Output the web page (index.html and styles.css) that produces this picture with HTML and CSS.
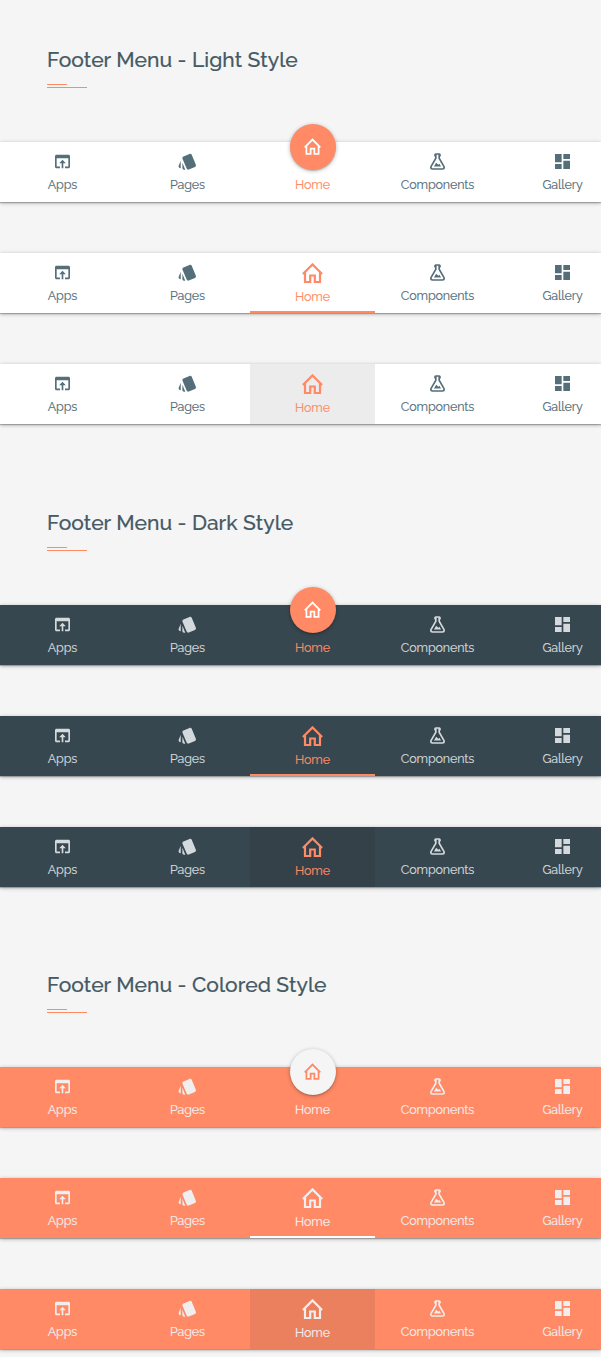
FILE: index.html
```html
<!DOCTYPE html>
<html lang="en">
<head>
<meta charset="utf-8">
<title>Footer Menu</title>
<link rel="stylesheet" href="styles.css">
</head>
<body>
<svg class="sprite" aria-hidden="true">
  <symbol id="apps" viewBox="0 0 24 24"><path d="M12 10l-4 4h3v6h2v-6h3m3.2-10H4.8C3.8 4 3 4.8 3 5.8v12.4c0 1 .8 1.8 1.8 1.8H9v-2H5V8h14v10h-4v2h4.2c1 0 1.8-.8 1.8-1.8V5.8c0-1-.8-1.8-1.8-1.8z"/></symbol>
  <symbol id="pages" viewBox="0 0 24 24"><path d="M2.53 19.65l1.34.56v-9.03l-2.43 5.86c-.41 1.02.08 2.19 1.09 2.61zm19.5-3.7L17.07 3.98c-.31-.75-1.04-1.21-1.81-1.23-.26 0-.53.04-.79.15L7.1 5.95c-.75.31-1.21 1.03-1.23 1.8-.01.27.04.54.15.8l4.96 11.97c.31.76 1.05 1.22 1.83 1.23.26 0 .52-.05.77-.15l7.36-3.05c1.02-.42 1.51-1.59 1.09-2.6zM5.88 19.75c0 1.1.9 2 2 2h1.45l-3.45-8.34v6.34z"/></symbol>
  <symbol id="flask" viewBox="0 0 24 24"><path d="M5,19A1,1 0 0,0 6,20H18A1,1 0 0,0 19,19C19,18.79 18.93,18.59 18.82,18.43L13,8.35V4H11V8.35L5.18,18.43C5.07,18.59 5,18.79 5,19M6,22A3,3 0 0,1 3,19C3,18.4 3.18,17.84 3.5,17.37L9,7.81V6A1,1 0 0,1 8,5V4A2,2 0 0,1 10,2H14A2,2 0 0,1 16,4V5A1,1 0 0,1 15,6V7.81L20.5,17.37C20.82,17.84 21,18.4 21,19A3,3 0 0,1 18,22H6M13,16L14.34,14.66L16.27,18H7.73L10.39,13.39L13,16Z"/></symbol>
  <symbol id="gallery" viewBox="0 0 24 24"><path d="M13,3V9H21V3M13,21H21V11H13M3,21H11V15H3M3,13H11V3H3V13Z"/></symbol>
  <symbol id="home" viewBox="0 0 21 20"><path fill="none" stroke="currentColor" stroke-width="2.2" d="M.9 11L10.5 1.4 20.1 11M3 9.5V19H8.2V12.5H12.8V19H18V9.5"/></symbol>
</svg>

<section class="group light">
  <h2 class="title">Footer Menu - Light Style</h2>
  <div class="rule"></div>
  <nav class="bar raised">
    <a class="item"><svg class="icon"><use href="#apps"/></svg><span class="label">Apps</span></a>
    <a class="item"><svg class="icon"><use href="#pages"/></svg><span class="label">Pages</span></a>
    <a class="item active"><span class="disc"><svg class="home"><use href="#home"/></svg></span><span class="label">Home</span></a>
    <a class="item"><svg class="icon"><use href="#flask"/></svg><span class="label">Components</span></a>
    <a class="item"><svg class="icon"><use href="#gallery"/></svg><span class="label">Gallery</span></a>
  </nav>
  <nav class="bar lined">
    <a class="item"><svg class="icon"><use href="#apps"/></svg><span class="label">Apps</span></a>
    <a class="item"><svg class="icon"><use href="#pages"/></svg><span class="label">Pages</span></a>
    <a class="item active"><svg class="home"><use href="#home"/></svg><span class="label">Home</span></a>
    <a class="item"><svg class="icon"><use href="#flask"/></svg><span class="label">Components</span></a>
    <a class="item"><svg class="icon"><use href="#gallery"/></svg><span class="label">Gallery</span></a>
  </nav>
  <nav class="bar filled">
    <a class="item"><svg class="icon"><use href="#apps"/></svg><span class="label">Apps</span></a>
    <a class="item"><svg class="icon"><use href="#pages"/></svg><span class="label">Pages</span></a>
    <a class="item active"><svg class="home"><use href="#home"/></svg><span class="label">Home</span></a>
    <a class="item"><svg class="icon"><use href="#flask"/></svg><span class="label">Components</span></a>
    <a class="item"><svg class="icon"><use href="#gallery"/></svg><span class="label">Gallery</span></a>
  </nav>
</section>

<section class="group dark">
  <h2 class="title">Footer Menu - Dark Style</h2>
  <div class="rule"></div>
  <nav class="bar raised">
    <a class="item"><svg class="icon"><use href="#apps"/></svg><span class="label">Apps</span></a>
    <a class="item"><svg class="icon"><use href="#pages"/></svg><span class="label">Pages</span></a>
    <a class="item active"><span class="disc"><svg class="home"><use href="#home"/></svg></span><span class="label">Home</span></a>
    <a class="item"><svg class="icon"><use href="#flask"/></svg><span class="label">Components</span></a>
    <a class="item"><svg class="icon"><use href="#gallery"/></svg><span class="label">Gallery</span></a>
  </nav>
  <nav class="bar lined">
    <a class="item"><svg class="icon"><use href="#apps"/></svg><span class="label">Apps</span></a>
    <a class="item"><svg class="icon"><use href="#pages"/></svg><span class="label">Pages</span></a>
    <a class="item active"><svg class="home"><use href="#home"/></svg><span class="label">Home</span></a>
    <a class="item"><svg class="icon"><use href="#flask"/></svg><span class="label">Components</span></a>
    <a class="item"><svg class="icon"><use href="#gallery"/></svg><span class="label">Gallery</span></a>
  </nav>
  <nav class="bar filled">
    <a class="item"><svg class="icon"><use href="#apps"/></svg><span class="label">Apps</span></a>
    <a class="item"><svg class="icon"><use href="#pages"/></svg><span class="label">Pages</span></a>
    <a class="item active"><svg class="home"><use href="#home"/></svg><span class="label">Home</span></a>
    <a class="item"><svg class="icon"><use href="#flask"/></svg><span class="label">Components</span></a>
    <a class="item"><svg class="icon"><use href="#gallery"/></svg><span class="label">Gallery</span></a>
  </nav>
</section>

<section class="group colored">
  <h2 class="title">Footer Menu - Colored Style</h2>
  <div class="rule"></div>
  <nav class="bar raised">
    <a class="item"><svg class="icon"><use href="#apps"/></svg><span class="label">Apps</span></a>
    <a class="item"><svg class="icon"><use href="#pages"/></svg><span class="label">Pages</span></a>
    <a class="item active"><span class="disc"><svg class="home"><use href="#home"/></svg></span><span class="label">Home</span></a>
    <a class="item"><svg class="icon"><use href="#flask"/></svg><span class="label">Components</span></a>
    <a class="item"><svg class="icon"><use href="#gallery"/></svg><span class="label">Gallery</span></a>
  </nav>
  <nav class="bar lined">
    <a class="item"><svg class="icon"><use href="#apps"/></svg><span class="label">Apps</span></a>
    <a class="item"><svg class="icon"><use href="#pages"/></svg><span class="label">Pages</span></a>
    <a class="item active"><svg class="home"><use href="#home"/></svg><span class="label">Home</span></a>
    <a class="item"><svg class="icon"><use href="#flask"/></svg><span class="label">Components</span></a>
    <a class="item"><svg class="icon"><use href="#gallery"/></svg><span class="label">Gallery</span></a>
  </nav>
  <nav class="bar filled">
    <a class="item"><svg class="icon"><use href="#apps"/></svg><span class="label">Apps</span></a>
    <a class="item"><svg class="icon"><use href="#pages"/></svg><span class="label">Pages</span></a>
    <a class="item active"><svg class="home"><use href="#home"/></svg><span class="label">Home</span></a>
    <a class="item"><svg class="icon"><use href="#flask"/></svg><span class="label">Components</span></a>
    <a class="item"><svg class="icon"><use href="#gallery"/></svg><span class="label">Gallery</span></a>
  </nav>
</section>
</body>
</html>
```
FILE: styles.css
```css
* { box-sizing: border-box; }
body {
  margin: 0;
  height: 1357px;
  overflow: hidden;
  background: #f5f5f5;
  font-family: Raleway, Lato, sans-serif;
}
.sprite { display: none; }
.group { height: 463px; padding-top: 44px; }
.dark { height: 462px; }
.colored { height: 432px; }
.title {
  margin: 0 0 0 47px;
  height: 32px;
  line-height: 32px;
  font-size: 21px;
  font-weight: 500;
  letter-spacing: .08px;
  color: #455a64;
  white-space: nowrap;
  -webkit-text-stroke: .18px currentColor;
}
.rule {
  width: 40px;
  height: 4px;
  margin: 8px 0 54px 47px;
  border-bottom: 1px solid #ff8a65;
  background: linear-gradient(#ff8a65, #ff8a65) 0 0 / 20px 1px no-repeat;
}
.bar {
  display: grid;
  grid-template-columns: repeat(5, 125px);
  height: 60px;
  margin-bottom: 51px;
  box-shadow: 0 1px 4px rgba(0, 0, 0, .3), 0 1px 1px rgba(0, 0, 0, .22);
}
.item {
  display: flex;
  flex-direction: column;
  align-items: center;
  height: 60px;
  padding-top: 10px;
}
.icon {
  width: 20px;
  height: 20px;
  fill: currentColor;
  transform: translate(-.5px, -.5px);
}
.label {
  height: 16px;
  margin-top: 5px;
  font-size: 12.5px;
  line-height: 16px;
  letter-spacing: -.13px;
  -webkit-text-stroke: .15px currentColor;
}
.home { width: 21px; height: 20px; flex: none; }
.item.active .label { margin-top: 6px; }
.raised .active { padding-top: 0; }
.disc {
  display: flex;
  align-items: center;
  justify-content: center;
  flex: none;
  width: 46px;
  height: 46px;
  margin-top: -18px;
  margin-left: 1px;
  border-radius: 50%;
  background: #ff8a65;
  color: #fff;
  box-shadow: 0 1px 4px rgba(0, 0, 0, .28), 0 1px 1px rgba(0, 0, 0, .15);
}
.disc .home { width: 17px; height: 17px; margin: 0 1px 1px 0; }
.raised .item.active .label { margin-top: 6px; padding-top: 1px; }
.lined .active { border-bottom: 2px solid #ff8a65; }

.light .bar { background: #fff; color: #546e7a; }
.light .active { color: #ff8a65; }
.light .filled .active { background: #ececec; }

.dark .bar { background: #37474f; color: #d3d9dc; }
.dark .active { color: #ff8a65; }
.dark .filled .active { background: #344148; }

.colored .bar { background: #ff8a65; color: #f0eeee; }
.colored .disc { background: #f5f5f5; color: #ff8a65; }
.colored .lined .active { border-color: #fff; }
.colored .filled .active { background: #eb805e; }
```
